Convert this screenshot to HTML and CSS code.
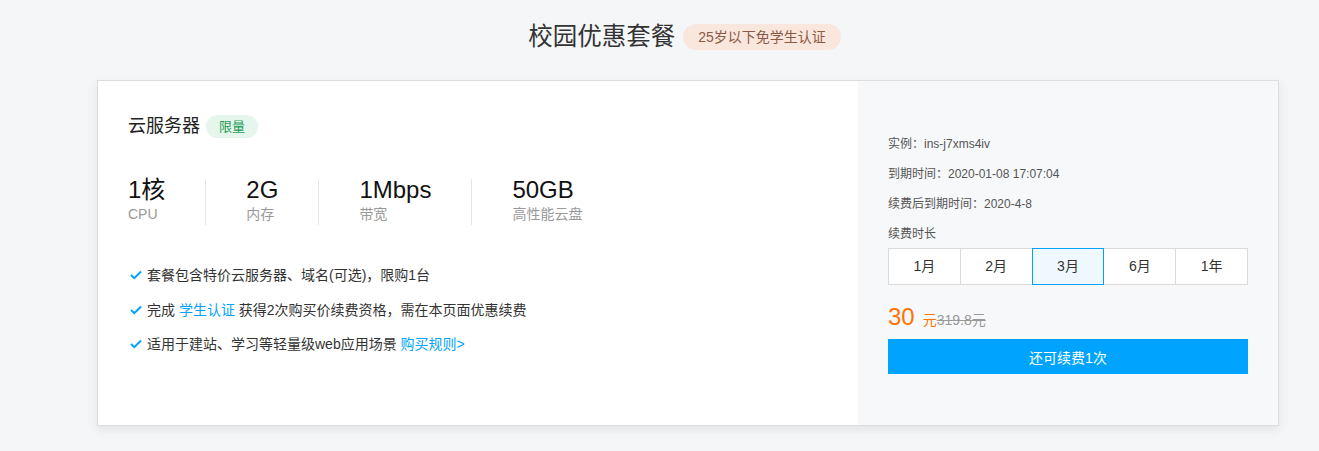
FILE: index.html
```html
<!DOCTYPE html>
<html lang="zh-CN">
<head>
<meta charset="utf-8">
<title>校园优惠套餐</title>
<link rel="stylesheet" href="styles.css">
</head>
<body>
<div class="page">
  <div class="head">
    <h1 class="title">校园优惠套餐</h1>
    <span class="tag">25岁以下免学生认证</span>
  </div>
  <div class="card">
    <div class="left">
      <div class="name-row">
        <span class="name">云服务器</span>
        <span class="limit">限量</span>
      </div>
      <div class="specs">
        <div class="spec"><div class="val">1核</div><div class="lbl">CPU</div></div>
        <div class="spec"><div class="val">2G</div><div class="lbl">内存</div></div>
        <div class="spec"><div class="val">1Mbps</div><div class="lbl">带宽</div></div>
        <div class="spec"><div class="val">50GB</div><div class="lbl">高性能云盘</div></div>
      </div>
      <ul class="feats">
        <li><svg class="chk" viewBox="0 0 12 10"><path d="M1 5 L4.3 8.2 L11 1.5" fill="none" stroke="#00a4ff" stroke-width="2"/></svg>套餐包含特价云服务器、域名(可选)，限购1台</li>
        <li><svg class="chk" viewBox="0 0 12 10"><path d="M1 5 L4.3 8.2 L11 1.5" fill="none" stroke="#00a4ff" stroke-width="2"/></svg>完成 <a class="link">学生认证</a> 获得2次购买价续费资格，需在本页面优惠续费</li>
        <li><svg class="chk" viewBox="0 0 12 10"><path d="M1 5 L4.3 8.2 L11 1.5" fill="none" stroke="#00a4ff" stroke-width="2"/></svg>适用于建站、学习等轻量级web应用场景 <a class="link">购买规则&gt;</a></li>
      </ul>
    </div>
    <div class="right">
      <p class="info">实例：ins-j7xms4iv</p>
      <p class="info">到期时间：2020-01-08 17:07:04</p>
      <p class="info">续费后到期时间：2020-4-8</p>
      <p class="info last">续费时长</p>
      <div class="opts">
        <span class="opt">1月</span>
        <span class="opt">2月</span>
        <span class="opt on">3月</span>
        <span class="opt">6月</span>
        <span class="opt">1年</span>
      </div>
      <div class="price"><span class="num">30</span><span class="unit">元</span><span class="orig">319.8元</span></div>
      <button class="btn">还可续费1次</button>
    </div>
  </div>
</div>
</body>
</html>
```
FILE: styles.css
```css
* { box-sizing: border-box; }
html, body { margin: 0; padding: 0; }
body {
  background: #f5f6f8;
  font-family: "Liberation Sans", "Noto Sans CJK SC", Arial, sans-serif;
  color: #333;
  width: 1319px;
  height: 451px;
  overflow: hidden;
}
.page { padding-top: 20px; }
.head {
  display: flex;
  justify-content: center;
  align-items: center;
  gap: 8px;
  padding-left: 50px;
  height: 34px;
}
.title {
  margin: 0;
  font-size: 24.5px;
  font-weight: normal;
  color: #333;
  line-height: 34px;
}
.tag {
  display: inline-block;
  height: 26px;
  line-height: 26px;
  padding: 0 15px;
  border-radius: 13px;
  background: #f9e7dd;
  color: #8b5a46;
  font-size: 14px;
}
.card {
  margin: 26px 0 0 97px;
  width: 1182px;
  height: 346px;
  display: flex;
  border: 1px solid #dcdde0;
  background: #fff;
  box-shadow: 0 4px 10px rgba(0,0,0,0.08);
}
.left {
  width: 760px;
  background: #fff;
  padding: 32px 0 0 30px;
}
.name-row { display: flex; align-items: center; gap: 6px; }
.name { font-size: 18px; color: #222; line-height: 26px; }
.limit {
  display: inline-block;
  height: 23px;
  line-height: 23px;
  padding: 0 13px;
  border-radius: 12px;
  background: #e5f6ec;
  color: #1d9a57;
  font-size: 13px;
}
.specs { display: flex; margin-top: 40px; }
.spec {
  padding: 0 40px;
  border-right: 1px solid #e5e5e5;
  height: 46px;
}
.spec:first-child { padding-left: 0; }
.spec:last-child { border-right: none; }
.val { font-size: 24px; color: #111; line-height: 26px; margin-top: -2px; }
.lbl { font-size: 14px; color: #999; line-height: 20px; margin-top: 1px; }
.feats { list-style: none; margin: 40px 0 0 2px; padding: 0; }
.feats li {
  font-size: 14px;
  color: #333;
  line-height: 20px;
  margin-bottom: 14.5px;
  display: flex;
  align-items: center;
  white-space: pre;
}
.chk { width: 12px; height: 10px; margin-right: 5px; }
.link { color: #00a4ff; }
.right {
  flex: 1;
  background: #f7f8fa;
  padding: 55px 30px 0 30px;
}
.info {
  margin: 0 0 13px 0;
  font-size: 12px;
  color: #555;
  line-height: 17px;
}
.info.last { margin-bottom: 5px; }
.opts { display: flex; }
.opt {
  width: 72.8px;
  height: 37px;
  line-height: 35px;
  text-align: center;
  font-size: 14px;
  color: #333;
  background: #fff;
  border: 1px solid #dadada;
  margin-left: -1px;
}
.opt:first-child { margin-left: 0; }
.opt.on {
  border-color: #00a4ff;
  background: #f0f8ff;
  position: relative;
  z-index: 1;
}
.price {
  margin-top: 18px;
  height: 30px;
  display: flex;
  align-items: baseline;
}
.num { font-size: 24px; color: #ff7200; }
.unit { font-size: 14px; color: #ff7200; margin-left: 8px; }
.orig { font-size: 14px; color: #999; text-decoration: line-through; }
.btn {
  display: block;
  margin-top: 6px;
  width: 360px;
  height: 35px;
  border: none;
  background: #00a4ff;
  color: #fff;
  font-size: 14px;
  font-family: inherit;
  padding: 0;
}
```
